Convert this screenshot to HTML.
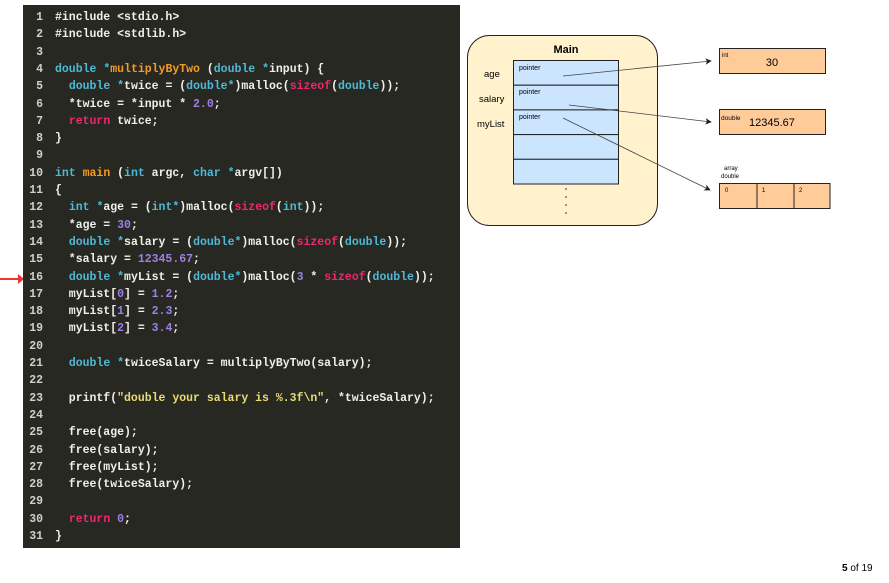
<!DOCTYPE html>
<html><head><meta charset="utf-8"><style>
body{margin:0;width:889px;height:583px;background:#fff;position:relative;overflow:hidden;font-family:"Liberation Sans",sans-serif}
#code{position:absolute;left:23px;top:5px;width:437px;height:543px;background:#272822}
.l{position:absolute;left:0;height:17px;line-height:17px;font-family:"Liberation Mono",monospace;font-size:11.5px;font-weight:bold;color:#f0f0ea;white-space:pre}
.n{display:inline-block;width:20px;text-align:right;color:#d0d0c8;margin-right:12px}
.b{color:#4fb9d6}.o{color:#f59a23}.p{color:#f0266f}.v{color:#9d7fe6}.s{color:#e6db74}
</style></head><body>
<div style="position:absolute;left:0;top:278px;width:20px;height:2px;background:#e33"></div>
<div style="position:absolute;left:18px;top:274px;width:0;height:0;border-top:5px solid transparent;border-bottom:5px solid transparent;border-left:6px solid #e33"></div>
<div id="code">
<div class="l" style="top:4px"><span class="n">1</span>#include &lt;stdio.h&gt;</div>
<div class="l" style="top:21.3px"><span class="n">2</span>#include &lt;stdlib.h&gt;</div>
<div class="l" style="top:38.6px"><span class="n">3</span></div>
<div class="l" style="top:55.9px"><span class="n">4</span><span class="b">double</span> <span class="b">*</span><span class="o">multiplyByTwo</span> (<span class="b">double</span> <span class="b">*</span>input) {</div>
<div class="l" style="top:73.2px"><span class="n">5</span>  <span class="b">double</span> <span class="b">*</span>twice = (<span class="b">double*</span>)malloc(<span class="p">sizeof</span>(<span class="b">double</span>));</div>
<div class="l" style="top:90.5px"><span class="n">6</span>  *twice = *input * <span class="v">2.0</span>;</div>
<div class="l" style="top:107.8px"><span class="n">7</span>  <span class="p">return</span> twice;</div>
<div class="l" style="top:125.1px"><span class="n">8</span>}</div>
<div class="l" style="top:142.4px"><span class="n">9</span></div>
<div class="l" style="top:159.7px"><span class="n">10</span><span class="b">int</span> <span class="o">main</span> (<span class="b">int</span> argc, <span class="b">char</span> <span class="b">*</span>argv[])</div>
<div class="l" style="top:177px"><span class="n">11</span>{</div>
<div class="l" style="top:194.3px"><span class="n">12</span>  <span class="b">int</span> <span class="b">*</span>age = (<span class="b">int*</span>)malloc(<span class="p">sizeof</span>(<span class="b">int</span>));</div>
<div class="l" style="top:211.6px"><span class="n">13</span>  *age = <span class="v">30</span>;</div>
<div class="l" style="top:228.9px"><span class="n">14</span>  <span class="b">double</span> <span class="b">*</span>salary = (<span class="b">double*</span>)malloc(<span class="p">sizeof</span>(<span class="b">double</span>));</div>
<div class="l" style="top:246.2px"><span class="n">15</span>  *salary = <span class="v">12345.67</span>;</div>
<div class="l" style="top:263.5px"><span class="n">16</span>  <span class="b">double</span> <span class="b">*</span>myList = (<span class="b">double*</span>)malloc(<span class="v">3</span> * <span class="p">sizeof</span>(<span class="b">double</span>));</div>
<div class="l" style="top:280.8px"><span class="n">17</span>  myList[<span class="v">0</span>] = <span class="v">1.2</span>;</div>
<div class="l" style="top:298.1px"><span class="n">18</span>  myList[<span class="v">1</span>] = <span class="v">2.3</span>;</div>
<div class="l" style="top:315.4px"><span class="n">19</span>  myList[<span class="v">2</span>] = <span class="v">3.4</span>;</div>
<div class="l" style="top:332.7px"><span class="n">20</span></div>
<div class="l" style="top:350px"><span class="n">21</span>  <span class="b">double</span> <span class="b">*</span>twiceSalary = multiplyByTwo(salary);</div>
<div class="l" style="top:367.3px"><span class="n">22</span></div>
<div class="l" style="top:384.6px"><span class="n">23</span>  printf(<span class="s">"double your salary is %.3f\n"</span>, *twiceSalary);</div>
<div class="l" style="top:401.9px"><span class="n">24</span></div>
<div class="l" style="top:419.2px"><span class="n">25</span>  free(age);</div>
<div class="l" style="top:436.5px"><span class="n">26</span>  free(salary);</div>
<div class="l" style="top:453.8px"><span class="n">27</span>  free(myList);</div>
<div class="l" style="top:471.1px"><span class="n">28</span>  free(twiceSalary);</div>
<div class="l" style="top:488.4px"><span class="n">29</span></div>
<div class="l" style="top:505.7px"><span class="n">30</span>  <span class="p">return</span> <span class="v">0</span>;</div>
<div class="l" style="top:523px"><span class="n">31</span>}</div>
</div>
<svg width="889" height="583" style="position:absolute;left:0;top:0" font-family="Liberation Sans, sans-serif">
<defs><marker id="a" markerWidth="8" markerHeight="8" refX="7" refY="4" orient="auto"><path d="M0,0 L8,4 L0,8 L2,4 z" fill="#222"/></marker></defs>
<rect x="467.5" y="35.5" width="190" height="190" rx="22" fill="#fff2cc" stroke="#222"/>
<text x="566" y="53" font-size="11" font-weight="bold" text-anchor="middle">Main</text>
<g fill="#cce5ff" stroke="#222">
<rect x="513.5" y="60.5" width="105" height="24.7"/><rect x="513.5" y="85.2" width="105" height="24.7"/><rect x="513.5" y="109.9" width="105" height="24.7"/><rect x="513.5" y="134.6" width="105" height="24.7"/><rect x="513.5" y="159.3" width="105" height="24.7"/></g>
<g font-size="7"><text x="519" y="70">pointer</text><text x="519" y="94">pointer</text><text x="519" y="119">pointer</text></g>
<g font-size="9.5"><text x="484" y="77">age</text><text x="479" y="102">salary</text><text x="477" y="127">myList</text></g>
<g fill="#222"><circle cx="566" cy="189" r=".8"/><circle cx="566" cy="197" r=".8"/><circle cx="566" cy="205" r=".8"/><circle cx="566" cy="213" r=".8"/></g>
<g fill="#ffcc99" stroke="#222"><rect x="719.5" y="48.5" width="106" height="25"/><rect x="719.5" y="109.5" width="106" height="25"/>
<rect x="719.5" y="183.5" width="37.5" height="25"/><rect x="757" y="183.5" width="37" height="25"/><rect x="794" y="183.5" width="36" height="25"/></g>
<text x="722" y="57" font-size="6">int</text><text x="772" y="66" font-size="11" text-anchor="middle">30</text>
<text x="721" y="120" font-size="6.5">double</text><text x="749" y="126" font-size="11">12345.67</text>
<text x="724" y="170" font-size="6">array</text><text x="721" y="178" font-size="6">double</text>
<g font-size="6"><text x="725" y="192">0</text><text x="762" y="192">1</text><text x="799" y="192">2</text></g>
<g stroke="#444" stroke-width=".8" fill="none" marker-end="url(#a)">
<path d="M563,76 L711,61"/><path d="M569,105 L711,122"/><path d="M563,118 L710,190"/></g>
<text x="842" y="571" font-size="10"><tspan font-weight="bold">5</tspan> of 19</text>
</svg>
</body></html>
